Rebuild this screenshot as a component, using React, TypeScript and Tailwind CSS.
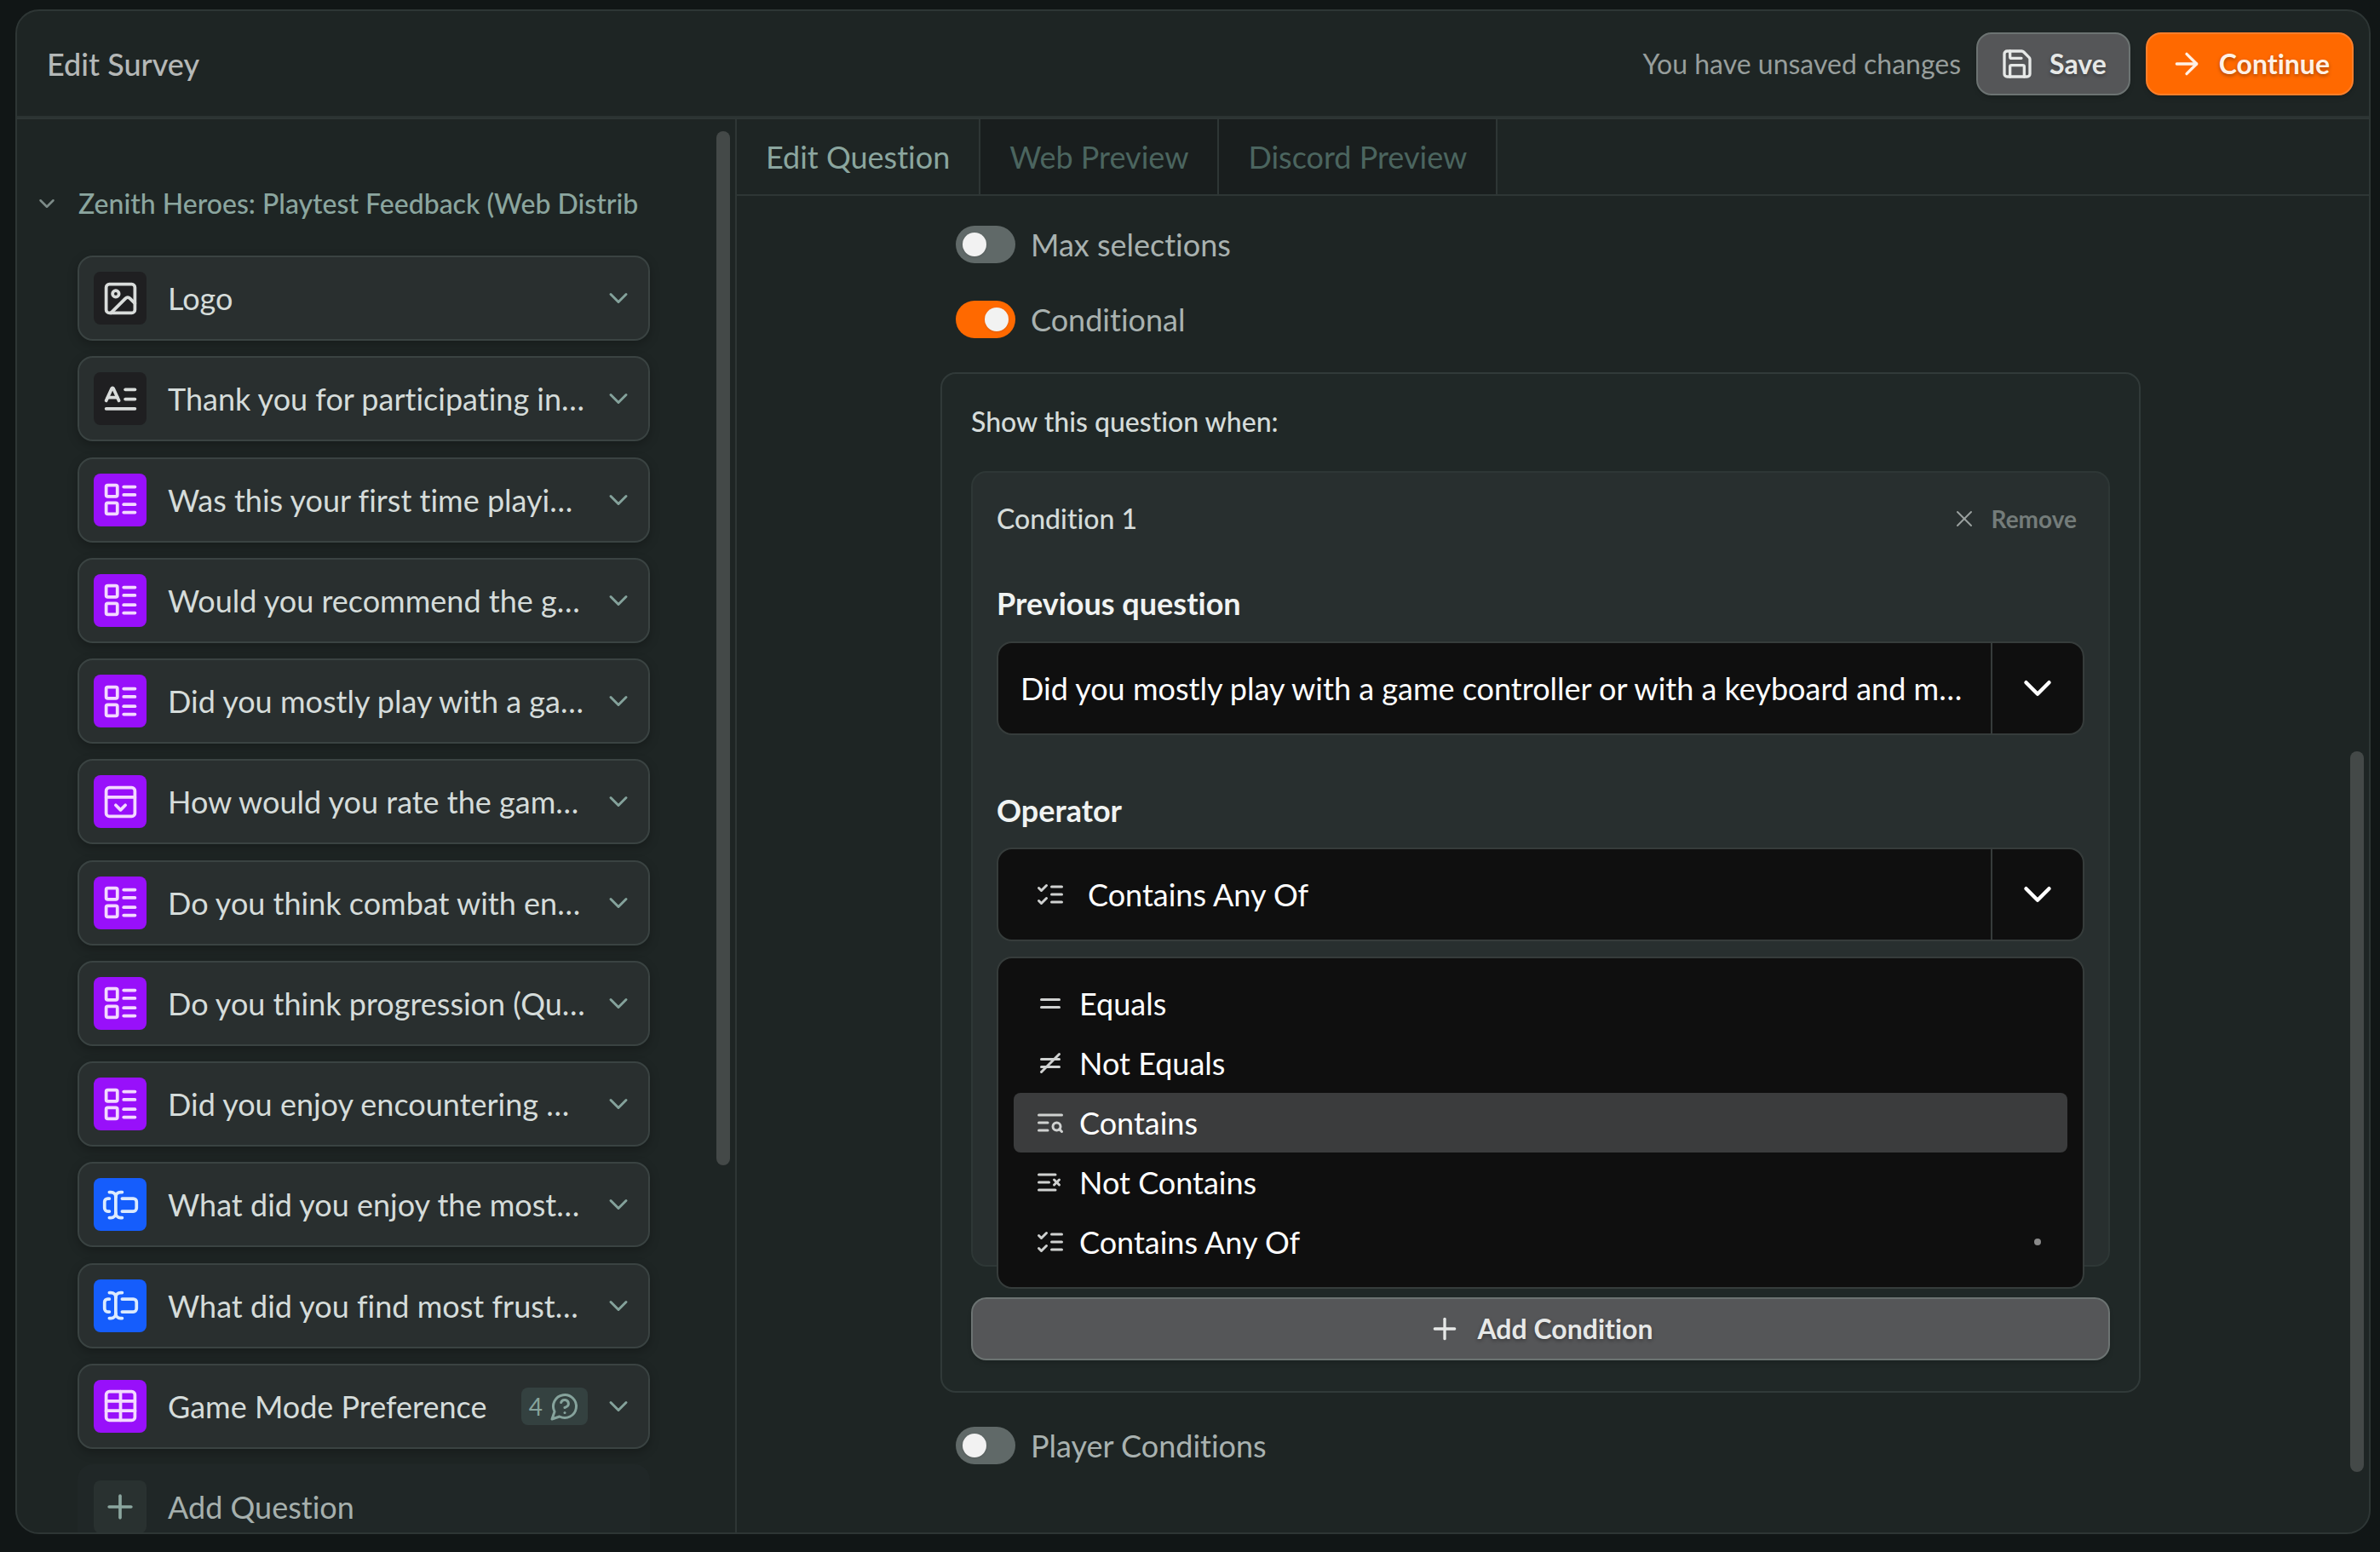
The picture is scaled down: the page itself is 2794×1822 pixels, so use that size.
import { useState } from 'react';
import type { ReactNode } from 'react';

type IconProps = { className?: string; children: ReactNode };

function Icon({ className = '', children }: IconProps) {
  return (
    <svg
      viewBox="0 0 24 24"
      fill="none"
      stroke="currentColor"
      strokeLinecap="round"
      strokeLinejoin="round"
      aria-hidden="true"
      className={`shrink-0 stroke-2 ${className}`}
    >
      {children}
    </svg>
  );
}

const shapes = {
  chevron: <path d="m6 9 6 6 6-6" />,
  image: (
    <>
      <rect width="18" height="18" x="3" y="3" rx="2" />
      <circle cx="9" cy="9" r="2" />
      <path d="m21 15-3.086-3.086a2 2 0 0 0-2.828 0L6 21" />
    </>
  ),
  letter: (
    <>
      <path d="M15 12h6" />
      <path d="M15 6h6" />
      <path d="m3 13 3.553-7.724a.5.5 0 0 1 .894 0L11 13" />
      <path d="M3 18h18" />
      <path d="M4 11h6" />
    </>
  ),
  list: (
    <>
      <rect width="7" height="7" x="3" y="3" rx="1" />
      <rect width="7" height="7" x="3" y="14" rx="1" />
      <path d="M14 4h7" />
      <path d="M14 9h7" />
      <path d="M14 15h7" />
      <path d="M14 20h7" />
    </>
  ),
  panel: (
    <>
      <rect width="18" height="18" x="3" y="3" rx="2" />
      <path d="M3 9h18" />
      <path d="m15 14-3 3-3-3" />
    </>
  ),
  input: (
    <>
      <path d="M5 4h1a3 3 0 0 1 3 3 3 3 0 0 1 3-3h1" />
      <path d="M13 20h-1a3 3 0 0 1-3-3 3 3 0 0 1-3 3H5" />
      <path d="M5 16H4a2 2 0 0 1-2-2v-4a2 2 0 0 1 2-2h1" />
      <path d="M13 8h7a2 2 0 0 1 2 2v4a2 2 0 0 1-2 2h-7" />
      <path d="M9 7v10" />
    </>
  ),
  table: (
    <>
      <path d="M12 3v18" />
      <rect width="18" height="18" x="3" y="3" rx="2" />
      <path d="M3 9h18" />
      <path d="M3 15h18" />
    </>
  ),
  plus: (
    <>
      <path d="M5 12h14" />
      <path d="M12 5v14" />
    </>
  ),
  question: (
    <>
      <path d="M7.9 20A9 9 0 1 0 4 16.1L2 22Z" />
      <path d="M9.09 9a3 3 0 0 1 5.83 1c0 2-3 3-3 3" />
      <path d="M12 17h.01" />
    </>
  ),
  save: (
    <>
      <path d="M15.2 3a2 2 0 0 1 1.4.6l3.8 3.8a2 2 0 0 1 .6 1.4V19a2 2 0 0 1-2 2H5a2 2 0 0 1-2-2V5a2 2 0 0 1 2-2z" />
      <path d="M17 21v-7a1 1 0 0 0-1-1H8a1 1 0 0 0-1 1v7" />
      <path d="M7 3v4a1 1 0 0 0 1 1h7" />
    </>
  ),
  arrow: (
    <>
      <path d="M5 12h14" />
      <path d="m12 5 7 7-7 7" />
    </>
  ),
  close: (
    <>
      <path d="M18 6 6 18" />
      <path d="m6 6 12 12" />
    </>
  ),
  equals: (
    <>
      <path d="M5 9h14" />
      <path d="M5 15h14" />
    </>
  ),
  notEquals: (
    <>
      <path d="M5 9h14" />
      <path d="M5 15h14" />
      <path d="M19 5 5 19" />
    </>
  ),
  contains: (
    <>
      <path d="M21 6H3" />
      <path d="M10 12H3" />
      <path d="M10 18H3" />
      <circle cx="17" cy="15" r="3" />
      <path d="m21 19-1.9-1.9" />
    </>
  ),
  notContains: (
    <>
      <path d="M11 12H3" />
      <path d="M16 6H3" />
      <path d="M16 18H3" />
      <path d="m19 10-4 4" />
      <path d="m15 10 4 4" />
    </>
  ),
  checks: (
    <>
      <path d="m3 17 2 2 4-4" />
      <path d="m3 7 2 2 4-4" />
      <path d="M13 6h8" />
      <path d="M13 12h8" />
      <path d="M13 18h8" />
    </>
  ),
};

type ShapeName = keyof typeof shapes;

const dark = 'bg-[#1f1f21] text-[#d9dcdb]';
const purple = 'bg-[#9810fa] text-[#f3d9ff]';
const blue = 'bg-[#155dfc] text-[#dbeafe]';

const questions: { label: string; icon: ShapeName; tone: string; count?: number }[] = [
  { label: 'Logo', icon: 'image', tone: dark },
  { label: 'Thank you for participating in…', icon: 'letter', tone: dark },
  { label: 'Was this your first time playi…', icon: 'list', tone: purple },
  { label: 'Would you recommend the g…', icon: 'list', tone: purple },
  { label: 'Did you mostly play with a ga…', icon: 'list', tone: purple },
  { label: 'How would you rate the gam…', icon: 'panel', tone: purple },
  { label: 'Do you think combat with en…', icon: 'list', tone: purple },
  { label: 'Do you think progression (Qu…', icon: 'list', tone: purple },
  { label: 'Did you enjoy encountering …', icon: 'list', tone: purple },
  { label: 'What did you enjoy the most…', icon: 'input', tone: blue },
  { label: 'What did you find most frust…', icon: 'input', tone: blue },
  { label: 'Game Mode Preference', icon: 'table', tone: purple, count: 4 },
];

const operators: { label: string; icon: ShapeName }[] = [
  { label: 'Equals', icon: 'equals' },
  { label: 'Not Equals', icon: 'notEquals' },
  { label: 'Contains', icon: 'contains' },
  { label: 'Not Contains', icon: 'notContains' },
  { label: 'Contains Any Of', icon: 'checks' },
];

function Header() {
  return (
    <header className="flex shrink-0 items-center justify-between border-b-2 border-[#2b3332] pt-[25px] pr-[18px] pb-6 pl-[35px]">
      <h1 className="text-[36px] leading-[44px] font-medium text-[#b5b8b7]">Edit Survey</h1>
      <div className="flex items-center gap-[18px]">
        <p className="text-[32px] leading-[44px] text-[#979e9c]">You have unsaved changes</p>
        <button
          type="button"
          className="flex h-[74px] items-center gap-[18px] rounded-[18px] border-2 border-[#6c7372] bg-[#555658] px-[26px] text-[32px] font-bold text-[#e6e8e7] shadow-md [text-shadow:0_2px_4px_rgba(0,0,0,0.35)]"
        >
          <Icon className="size-10">{shapes.save}</Icon>
          Save
        </button>
        <button
          type="button"
          className="flex h-[74px] items-center gap-[18px] rounded-[18px] border-2 border-[#ff7f2a] bg-[#ff6900] px-[26px] text-[32px] font-bold text-[#fff1e6] shadow-md [text-shadow:0_2px_4px_rgba(0,0,0,0.35)]"
        >
          <Icon className="size-10">{shapes.arrow}</Icon>
          Continue
        </button>
      </div>
    </header>
  );
}

function QuestionRow({ label, icon, tone, count }: (typeof questions)[number]) {
  return (
    <li>
      <button
        type="button"
        className="flex h-[100px] w-full items-center rounded-[18px] border-2 border-[#3a4342] bg-[#292f2f] px-[17px] text-left shadow-[0_4px_12px_rgba(0,0,0,0.25)]"
      >
        <span className={`flex size-[62px] shrink-0 items-center justify-center rounded-lg ${tone}`}>
          <Icon className="size-[45px]">{shapes[icon]}</Icon>
        </span>
        <span className="ml-[25px] grow text-[36px] leading-[54px] whitespace-nowrap text-[#d5dcda]">{label}</span>
        {count !== undefined && (
          <span className="mr-[18px] flex h-11 items-center gap-2 rounded-lg bg-[#344140] px-[9px] text-[28px] text-[#86a39c]">
            {count}
            <Icon className="size-9">{shapes.question}</Icon>
          </span>
        )}
        <Icon className="size-9 text-[#84a29b]">{shapes.chevron}</Icon>
      </button>
    </li>
  );
}

function Sidebar() {
  return (
    <aside className="flex w-[845px] shrink-0 border-r-2 border-[#2e3635]">
      <div className="flex grow flex-col overflow-hidden pt-[75px] pr-[78px]">
        <button type="button" className="flex items-center gap-[22px] pl-5 text-left">
          <Icon className="size-[30px] text-[#7d8b88]">{shapes.chevron}</Icon>
          <span className="text-[32px] leading-[48px] font-medium whitespace-nowrap text-[#8ba69f]">
            Zenith Heroes: Playtest Feedback (Web Distrib
          </span>
        </button>
        <ul className="mt-[37px] flex grow flex-col justify-between pl-[71px]">
          {questions.map((q) => (
            <QuestionRow key={q.label} {...q} />
          ))}
          <li className="-mb-5">
            <button
              type="button"
              className="flex h-[100px] w-full items-center rounded-[18px] bg-[#202727] px-[19px] text-left"
            >
              <span className="flex size-[62px] items-center justify-center rounded-lg bg-[#293130] text-[#8ba69f]">
                <Icon className="size-11">{shapes.plus}</Icon>
              </span>
              <span className="ml-[25px] text-[36px] leading-[54px] text-[#a6b0ad]">Add Question</span>
            </button>
          </li>
        </ul>
      </div>
      <div className="flex flex-col pt-3.5 pr-1.5 pb-[431px]">
        <div className="w-4 grow rounded-full bg-[#444948]" />
      </div>
    </aside>
  );
}

function Tabs() {
  const tab = 'h-[88px] border-r-2 border-[#2e3635] px-[34px] text-[36px]';
  return (
    <div role="tablist" className="flex shrink-0 border-b-2 border-[#2e3635]">
      <button role="tab" aria-selected="true" type="button" className={`${tab} text-[#8ba69f]`}>
        Edit Question
      </button>
      <button role="tab" aria-selected="false" type="button" className={`${tab} bg-[#191e1e] text-[#4b655f]`}>
        Web Preview
      </button>
      <button role="tab" aria-selected="false" type="button" className={`${tab} bg-[#191e1e] text-[#4b655f]`}>
        Discord Preview
      </button>
    </div>
  );
}

function Toggle({ label, initial = false }: { label: string; initial?: boolean }) {
  const [on, setOn] = useState(initial);
  return (
    <label className="flex h-11 items-center gap-[18px] self-start pl-[18px] text-[36px] leading-[44px] text-[#a9b2b0]">
      <input
        type="checkbox"
        role="switch"
        checked={on}
        onChange={() => setOn(!on)}
        className="flex h-11 w-[70px] appearance-none items-center rounded-full bg-[#606968] px-2 before:size-7 before:rounded-full before:bg-[#f2f2f2] before:shadow checked:justify-end checked:bg-[#ff6900]"
      />
      {label}
    </label>
  );
}

function SelectBox({ id, value, icon }: { id: string; value: string; icon?: ShapeName }) {
  return (
    <div className="flex h-[110px] items-stretch overflow-hidden rounded-[18px] border-2 border-[#363c3b] bg-[#0f0f0f] text-white">
      {icon && (
        <span className="flex items-center pl-[43px] text-[#cfd1d0]">
          <Icon className="size-9">{shapes[icon]}</Icon>
        </span>
      )}
      <select id={id} defaultValue={value} className="min-w-0 flex-1 appearance-none bg-transparent px-[26px] text-[36px]">
        <option>{value}</option>
      </select>
      <span className="flex w-[108px] items-center justify-center border-l-2 border-[#363c3b]">
        <Icon className="size-[54px]">{shapes.chevron}</Icon>
      </span>
    </div>
  );
}

function OperatorMenu() {
  return (
    <ul
      role="listbox"
      aria-label="Operator"
      className="absolute top-full right-0 left-0 z-10 mt-[18px] rounded-[18px] border-2 border-[#363c3b] bg-[#0f0f0f] p-[18px] text-white"
    >
      {operators.map(({ label, icon }) => {
        const selected = label === 'Contains Any Of';
        const active = label === 'Contains';
        return (
          <li
            key={label}
            role="option"
            aria-selected={selected}
            className={`flex h-[70px] items-center gap-4 rounded-lg px-[25px] text-[36px] ${active ? 'bg-[#3b3c3d]' : ''}`}
          >
            <Icon className="size-9 text-[#cfd1d0]">{shapes[icon]}</Icon>
            {label}
            {selected && <span className="mr-1.5 ml-auto size-2 rounded-full bg-[#8a8a8a]" />}
          </li>
        );
      })}
    </ul>
  );
}

function ConditionCard() {
  return (
    <div className="rounded-[18px] border-2 border-[#2e3736] bg-[#282f2f] px-7 pt-8 pb-[380px]">
      <div className="flex items-center justify-between">
        <h3 className="text-[32px] leading-[44px] font-medium text-[#d5dcda]">Condition 1</h3>
        <button type="button" className="flex items-center gap-4 pr-[9px] text-[28px] leading-[44px] font-bold text-[#747c7a]">
          <Icon className="size-8 stroke-[1.5] text-[#9aa19f]">{shapes.close}</Icon>
          Remove
        </button>
      </div>
      <label htmlFor="previous-question" className="mt-[55px] mb-[23px] block text-[36px] leading-[44px] font-bold text-[#f0f3f2]">
        Previous question
      </label>
      <SelectBox
        id="previous-question"
        value="Did you mostly play with a game controller or with a keyboard and m…"
      />
      <label htmlFor="operator" className="mt-[66px] mb-[22px] block text-[36px] leading-[44px] font-bold text-[#f0f3f2]">
        Operator
      </label>
      <div className="relative">
        <SelectBox id="operator" value="Contains Any Of" icon="checks" />
        <OperatorMenu />
      </div>
    </div>
  );
}

function Editor() {
  return (
    <main className="flex min-w-0 grow flex-col">
      <Tabs />
      <div className="flex min-h-0 grow">
        <div className="min-w-0 grow overflow-hidden">
          <div className="mx-auto flex max-w-[1409px] flex-col pt-[35px]">
            <Toggle label="Max selections" />
            <div className="mt-11 flex">
              <Toggle label="Conditional" initial />
            </div>
            <section className="my-10 flex flex-col gap-9 rounded-[18px] border-2 border-[#313a39] bg-[#202827] px-[34px] pt-[34px] pb-9">
              <h2 className="text-[32px] leading-[44px] font-medium text-[#d5dcda]">Show this question when:</h2>
              <ConditionCard />
              <button
                type="button"
                className="flex h-[74px] items-center justify-center gap-[18px] rounded-[18px] border-2 border-[#6c7372] bg-[#555658] text-[32px] font-bold text-[#e6e8e7] shadow-md [text-shadow:0_2px_4px_rgba(0,0,0,0.35)]"
              >
                <Icon className="size-10">{shapes.plus}</Icon>
                Add Condition
              </button>
            </section>
            <Toggle label="Player Conditions" />
          </div>
        </div>
        <div className="flex shrink-0 flex-col pt-[652px] pr-1.5 pb-[71px] pl-[7px]">
          <div className="w-4 grow rounded-full bg-[#444948]" />
        </div>
      </div>
    </main>
  );
}

export default function App() {
  return (
    <div className="flex h-screen flex-col bg-[#111616] pt-[11px] pr-[11px] pb-[21px] pl-[18px] font-[Lato,sans-serif] [font-variant-ligatures:none]">
      <div className="flex min-h-0 grow flex-col overflow-hidden rounded-[28px] border-2 border-[#2e3635] bg-[#1e2524]">
        <Header />
        <div className="flex min-h-0 grow border-t-2 border-[#2e3635]">
          <Sidebar />
          <Editor />
        </div>
      </div>
    </div>
  );
}
